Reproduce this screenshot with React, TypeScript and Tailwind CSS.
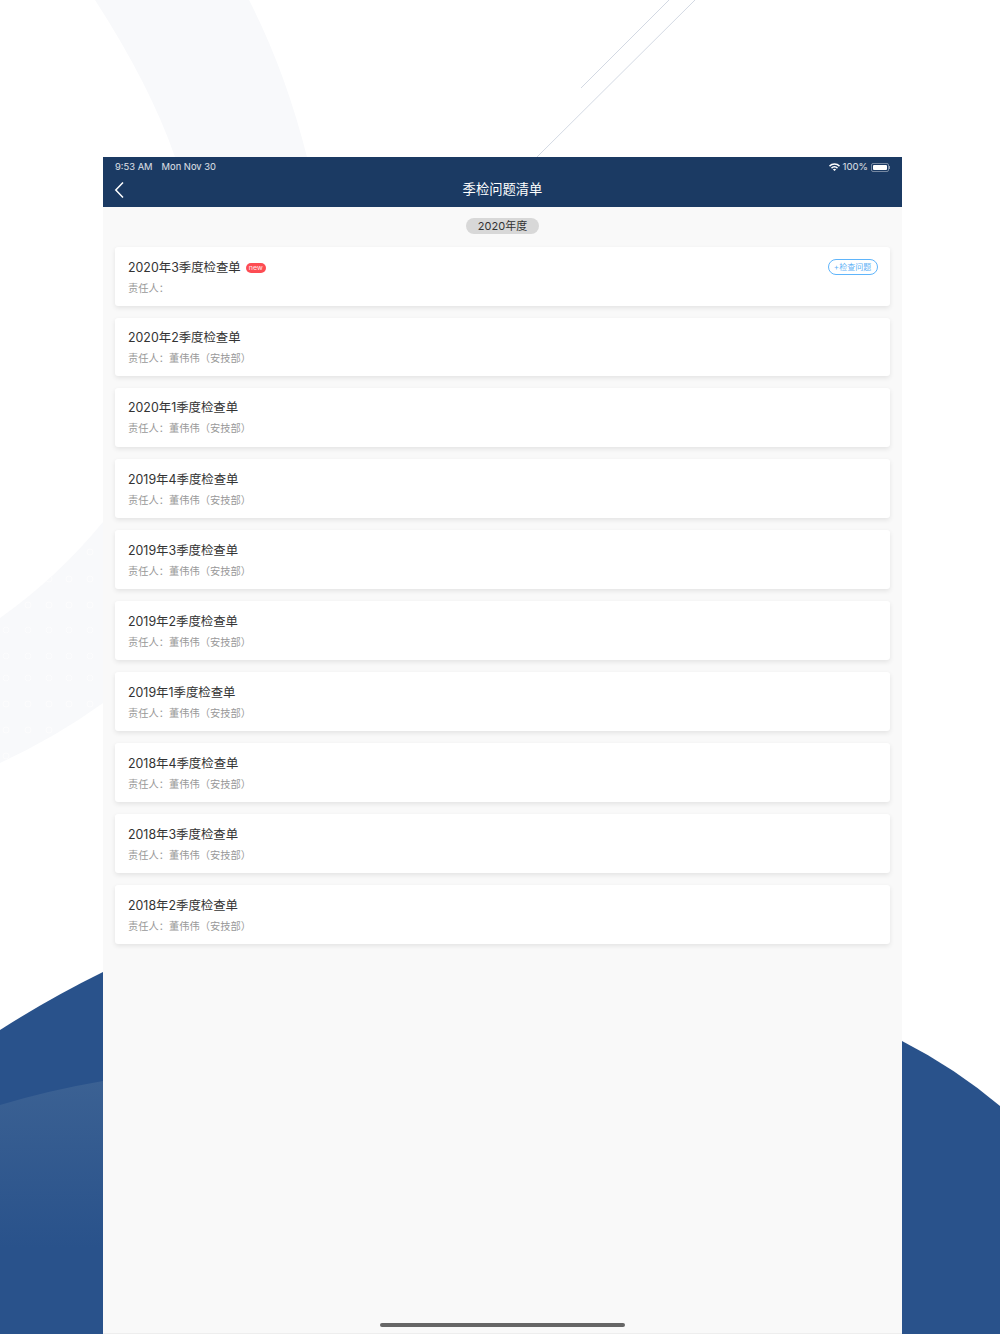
import React from "react";

const font = { fontFamily: '"Inter", "Noto Sans CJK SC", sans-serif' };

const owner = "责任人：董伟伟（安技部）";

const records = [
  { title: "2020年3季度检查单", owner: "责任人：", isNew: true },
  { title: "2020年2季度检查单", owner },
  { title: "2020年1季度检查单", owner },
  { title: "2019年4季度检查单", owner },
  { title: "2019年3季度检查单", owner },
  { title: "2019年2季度检查单", owner },
  { title: "2019年1季度检查单", owner },
  { title: "2018年4季度检查单", owner },
  { title: "2018年3季度检查单", owner },
  { title: "2018年2季度检查单", owner },
];

// little rings sitting on the pale band at the left
const dots: { x: number; y: number }[] = [];
for (const y of [552, 579, 605, 630, 656, 678, 704, 730, 756]) {
  for (const x of [6, 28, 49, 69, 90]) {
    dots.push({ x, y });
  }
}

const Backdrop = () => (
  <svg className="absolute inset-0" width="1000" height="1334" viewBox="0 0 1000 1334">
    <defs>
      <linearGradient id="fade" x1="0" y1="1081" x2="0" y2="1248" gradientUnits="userSpaceOnUse">
        <stop offset="0" stopColor="#3b6193" />
        <stop offset="1" stopColor="#29528b" />
      </linearGradient>
      <clipPath id="band">
        <path d="M0 618 Q58 577 103 522 V703 Q56 737 0 763 Z" />
      </clipPath>
    </defs>
    <path d="M95 0 Q150 85 175 157 H307 Q285 70 249 0 Z" fill="#f8f9fb" />
    <path d="M0 618 Q58 577 103 522 V703 Q56 737 0 763 Z" fill="#f8f9fb" />
    <g clipPath="url(#band)">
      {dots.map((d) => (
        <circle key={`${d.x}-${d.y}`} cx={d.x} cy={d.y} r="3" fill="none" stroke="#fcfcfd" strokeWidth="1" />
      ))}
    </g>
    <line x1="669" y1="0" x2="581" y2="88" stroke="#d3d9e3" strokeWidth="1" />
    <line x1="695" y1="0" x2="537" y2="157" stroke="#d3d9e3" strokeWidth="1" />
    <path d="M0 1030 Q50 998 103 972 V1334 H0 Z" fill="#29528b" />
    <path d="M0 1105 Q50 1090 103 1081 V1334 H0 Z" fill="url(#fade)" />
    <path d="M902 1041 Q955 1068 1000 1106 V1334 H902 Z" fill="#29528b" />
  </svg>
);

const StatusIcons = () => (
  <div className="flex items-center gap-[3px]">
    <svg width="11" height="8" viewBox="0 0 11 8">
      <path d="M0 2.6 A7.6 7.6 0 0 1 11 2.6 L10 3.7 A6.2 6.2 0 0 0 1 3.7 Z" fill="#fff" />
      <path d="M2 4.6 A4.8 4.8 0 0 1 9 4.6 L8 5.7 A3.4 3.4 0 0 0 3 5.7 Z" fill="#fff" />
      <path d="M3.9 6.5 A2.2 2.2 0 0 1 7.1 6.5 L5.5 8 Z" fill="#fff" />
    </svg>
    <span className="text-[9.6px] leading-none text-white/85">100%</span>
    <div className="flex items-center">
      <div className="flex h-[9px] w-[18px] items-center rounded-[2px] border border-white/40 p-[1px]">
        <div className="h-full w-full rounded-[1px] bg-white" />
      </div>
      <div className="h-[3px] w-[1px] bg-white/50" />
    </div>
  </div>
);

const Header = () => (
  <header className="relative h-[50px] bg-[#1b3a63] text-white">
    <div className="flex h-[19px] items-center justify-between pl-[12px] pr-[12px] pt-[1px] text-[9.4px] text-white/85">
      <div className="flex gap-[9px]">
        <span>9:53 AM</span>
        <span>Mon Nov 30</span>
      </div>
      <StatusIcons />
    </div>
    <div className="flex h-[27px] items-center justify-center text-[13.3px]">季检问题清单</div>
    <svg className="absolute left-[11px] top-[24px]" width="11" height="18" viewBox="0 0 11 18">
      <path d="M9 1.5 L1.8 9 L9 16.5" fill="none" stroke="#fff" strokeWidth="1.5" />
    </svg>
  </header>
);

const RecordCard = ({ item, index }: { item: (typeof records)[number]; index: number }) => (
  <div
    className={`flex items-start justify-between rounded-[3px] bg-white pl-[13px] pr-[12px] shadow-[0_2px_5px_rgba(0,0,0,0.09)] ${
      index === 1 ? "h-[58px]" : "h-[59px]"
    } ${index === 1 || index === 2 ? "pt-[11px]" : "pt-[12px]"}`}
  >
    <div>
      <div className="flex h-[18px] items-center text-[12.4px] text-[#333333]">
        {item.title}
        {item.isNew && (
          <span className="ml-[5px] flex h-[10px] w-[20px] items-center justify-center rounded-full bg-[#fd4c53] text-[7px] text-white/90">
            new
          </span>
        )}
      </div>
      <div className="mt-[4px] h-[14px] text-[10.25px] leading-[14px] text-[#999999]">{item.owner}</div>
    </div>
    {item.isNew && (
      <div className="flex h-[16px] w-[50px] items-center justify-center rounded-full border-[1.5px] border-[#5fb5fb] pr-[1px] text-[8px] text-[#5fb2f6]">
        +检查问题
      </div>
    )}
  </div>
);

export default function App() {
  return (
    <div className="relative h-[1334px] w-[1000px] overflow-hidden bg-white pt-[157px]" style={font}>
      <Backdrop />
      <div className="relative ml-[103px] flex h-[1177px] w-[799px] flex-col border-b border-[#eeeeee] bg-[#f9f9f9]">
        <Header />
        <div className="flex justify-center pt-[11px]">
          <span className="flex h-[16px] w-[73px] items-center justify-center rounded-full bg-[#d8d8d8] text-[11px] text-[#333333]">
            2020年度
          </span>
        </div>
        <div className="mt-[13px] flex flex-col gap-3 px-[12px]">
          {records.map((item, i) => (
            <RecordCard key={item.title} item={item} index={i} />
          ))}
        </div>
        <div className="absolute bottom-[6px] left-[277px] h-[4px] w-[245px] rounded-full bg-[#666666]" />
      </div>
    </div>
  );
}
